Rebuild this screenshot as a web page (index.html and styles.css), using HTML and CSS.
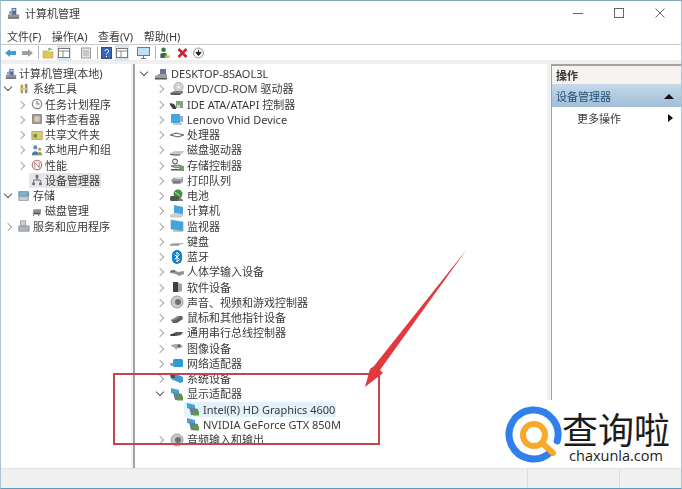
FILE: index.html
```html
<!DOCTYPE html>
<html lang="zh">
<head>
<meta charset="utf-8">
<title>计算机管理</title>
<link rel="stylesheet" href="styles.css">
</head>
<body>
<svg class="defs" width="0" height="0">
<defs>
<symbol id="comp" viewBox="0 0 14 14"><rect x="5" y="1" width="5" height="8" fill="#5a6b8c"/><rect x="6" y="2" width="3" height="2" fill="#cfd8ea"/><rect x="1" y="8" width="12" height="4" fill="#8b93a5"/><path d="M1 12h12" stroke="#444" /><circle cx="4" cy="6" r="2" fill="#7fa8d8"/></symbol>
<symbol id="tools" viewBox="0 0 14 14"><rect x="3" y="2" width="3" height="10" fill="#b79b4c"/><rect x="8" y="1" width="3" height="11" fill="#8a8f96"/><rect x="2" y="6" width="10" height="2" fill="#d9c77f"/></symbol>
<symbol id="clock" viewBox="0 0 14 14"><circle cx="7" cy="7" r="5.5" fill="#f2f2f2" stroke="#8a8a8a" stroke-width="1.4"/><path d="M7 3.5V7h3" stroke="#666" fill="none"/></symbol>
<symbol id="log" viewBox="0 0 14 14"><rect x="2" y="2" width="10" height="10" fill="#a7a39a" stroke="#6e6a62"/><rect x="4" y="4" width="6" height="6" fill="#d8c9b5"/></symbol>
<symbol id="share" viewBox="0 0 14 14"><rect x="1" y="3" width="12" height="9" fill="#e3c66c" stroke="#b59a45"/><rect x="3" y="6" width="4" height="4" fill="#4f9b53"/></symbol>
<symbol id="users" viewBox="0 0 14 14"><circle cx="5" cy="4" r="2.4" fill="#5a8cc4"/><path d="M1 13c0-6 8-6 8 0z" fill="#4a76ad"/><circle cx="10" cy="6" r="2" fill="#d39a63"/><path d="M7 13c0-5 6-5 6 0z" fill="#7aa05b"/></symbol>
<symbol id="perf" viewBox="0 0 14 14"><circle cx="7" cy="7" r="5.5" fill="#fff" stroke="#c6787a" stroke-width="1.5"/><path d="M4.5 10V4l5 6V4" stroke="#777" fill="none"/></symbol>
<symbol id="tree" viewBox="0 0 14 14"><rect x="5.5" y="1" width="3" height="4" fill="#5b6b7d"/><path d="M3 10V7h8v3M7 5v2" stroke="#666" fill="none"/><rect x="1.5" y="10" width="3" height="3" fill="#5b6b7d"/><rect x="9.5" y="10" width="3" height="3" fill="#5b6b7d"/></symbol>
<symbol id="store" viewBox="0 0 14 14"><rect x="1" y="2" width="11" height="5" fill="#7fb2d9" stroke="#5b87aa"/><rect x="1" y="8" width="11" height="4" fill="#cfd5da" stroke="#87919a"/><path d="M10 5l3-2v4z" fill="#5fa35f"/></symbol>
<symbol id="diskm" viewBox="0 0 14 14"><path d="M3 5h9l-1 5H2z" fill="#8a8f95"/><rect x="3" y="9" width="8" height="2" fill="#555"/><path d="M3 11v2M9 11v2" stroke="#555"/></symbol>
<symbol id="svc" viewBox="0 0 14 14"><rect x="3" y="1" width="6" height="6" fill="#c9ced3" stroke="#9aa0a6"/><rect x="1" y="7" width="12" height="6" fill="#aeb4ba" stroke="#8c9298"/></symbol>
<symbol id="pcroot" viewBox="0 0 14 14"><rect x="6" y="2" width="6" height="7" fill="#6c7688"/><path d="M1 9l4-2h8v4H1z" fill="#9aa1ac"/><rect x="1" y="11" width="12" height="1.5" fill="#555"/></symbol>
<symbol id="dvd" viewBox="0 0 14 14"><circle cx="8.5" cy="5" r="4.5" fill="#d2d4d6" stroke="#a9abad"/><circle cx="8.5" cy="5" r="1" fill="#fff"/><path d="M0 11l4-2h9v2l-3 2H1z" fill="#7e8286"/><path d="M1 12h9" stroke="#3a3a3a"/></symbol>
<symbol id="ide" viewBox="0 0 14 14"><path d="M0 6l4 1 2 3v2H3L0 8z" fill="#3e4347"/><rect x="6" y="4" width="7" height="7" fill="#7fa383"/><rect x="7" y="8" width="3" height="3" fill="#cfe0b0"/></symbol>
<symbol id="vhid" viewBox="0 0 14 14"><rect x="1" y="2" width="9" height="9" fill="#43a6dc"/><rect x="10" y="4" width="3" height="6" fill="#8fb2c6"/><path d="M3 12h9" stroke="#889"/></symbol>
<symbol id="cpu" viewBox="0 0 14 14"><path d="M0 7l6-2 8 2-6 2z" fill="#fff" stroke="#5a5f63" stroke-width="1.1"/></symbol>
<symbol id="disk" viewBox="0 0 14 14"><path d="M0 10l5-2h9l-1 2-3 2H2z" fill="#c6c8ca"/><path d="M0 11l3 1h7" stroke="#444" fill="none"/></symbol>
<symbol id="ctrl" viewBox="0 0 14 14"><circle cx="5" cy="3.5" r="2.5" fill="#eee" stroke="#444"/><path d="M1 8l7-1 4 1-6 2z" fill="#bbb" stroke="#444" stroke-width=".7"/><rect x="1" y="11" width="8" height="1.5" fill="#555"/><rect x="9" y="8" width="5" height="5" fill="#6fa36a"/></symbol>
<symbol id="print" viewBox="0 0 14 14"><path d="M1 7l4-3h8v5l-3 2H3z" fill="#9b9d9f"/><path d="M5 4h7v2H5z" fill="#dcdcdc"/><path d="M3 9h7" stroke="#555"/></symbol>
<symbol id="batt" viewBox="0 0 14 14"><circle cx="8" cy="5" r="4.5" fill="#3f8f45"/><rect x="0" y="7" width="9" height="5" rx="1.5" fill="#4c5a4a"/><path d="M5 3l5 4" stroke="#cfe6c8"/><path d="M9 8l4 3v1H8z" fill="#777"/></symbol>
<symbol id="pc" viewBox="0 0 14 14"><path d="M4 1l9 2v7L4 9z" fill="#47a5dd"/><path d="M0 12l3-2h9l1 1-2 2H1z" fill="#d3d6d9" stroke="#9a9a9a" stroke-width=".5"/></symbol>
<symbol id="mon" viewBox="0 0 14 14"><path d="M1 1l12 2v9L1 10z" fill="#43a3dc" stroke="#6fa5c6" stroke-width=".7"/><path d="M3 12h9" stroke="#8a99a5"/></symbol>
<symbol id="kbd" viewBox="0 0 14 14"><path d="M0 10l3-1h11l-1 1-3 1z" fill="#b9bcbf"/><path d="M0 11h9" stroke="#5a5a5a"/></symbol>
<symbol id="bt" viewBox="0 0 14 14"><rect x="2" y="0" width="10" height="14" rx="5" fill="#0f7fcf"/><path d="M4.5 4.5l5 5L7 12V2l2.500 2.500-5 5" stroke="#fff" fill="none"/></symbol>
<symbol id="hid" viewBox="0 0 14 14"><path d="M0 6l4-1 4 2 6-1v3l-5 2-3-2-6-1z" fill="#8f9396"/><path d="M1 6h4" stroke="#444"/></symbol>
<symbol id="soft" viewBox="0 0 14 14"><rect x="3" y="2" width="5" height="10" fill="#3e4144"/><path d="M8 3l4 1v7l-4 1z" fill="#9fa3a6"/></symbol>
<symbol id="snd" viewBox="0 0 14 14"><circle cx="7" cy="7" r="6" fill="#c7c9cb" stroke="#9a9c9e"/><circle cx="8" cy="7" r="3" fill="#6d7073"/></symbol>
<symbol id="mouse" viewBox="0 0 14 14"><path d="M1 9l7-4h4l1 3-6 4H3z" fill="#5d6164"/><path d="M3 9l6-3" stroke="#aaa"/></symbol>
<symbol id="usb" viewBox="0 0 14 14"><path d="M0 9l6-3h7l-2 3-5 1H2z" fill="#54585b"/><path d="M0 9h5" stroke="#222"/></symbol>
<symbol id="cam" viewBox="0 0 14 14"><path d="M1 4l4-1h5l3 2-2 2H8L6 9 4 6H2z" fill="#a8abad"/><circle cx="9" cy="5" r="1.400" fill="#555"/></symbol>
<symbol id="net" viewBox="0 0 14 14"><rect x="3" y="3" width="10" height="8" rx="1.500" fill="#2f9bd4"/><path d="M0 7h4v3H1z" fill="#7f9cae"/></symbol>
<symbol id="sys" viewBox="0 0 14 14"><path d="M1 3l5-1 7 3v5l-3 1-9-4z" fill="#3c9bd5"/><path d="M0 3h5v3H1z" fill="#4a5056"/></symbol>
<symbol id="gpu" viewBox="0 0 14 14"><path d="M1 1l8 2v5L1 6z" fill="#45a4da"/><path d="M3 5l9 2v6H5z" fill="#6c7f8c"/><rect x="7" y="9" width="6" height="4.500" fill="#5a9b49"/></symbol>
</defs>
</svg>

<div class="window">
  <header class="titlebar">
    <svg class="ticon"><use href="#comp"/></svg>
    <span class="ttext">计算机管理</span>
    <div class="winctrls">
      <svg class="wbtn" viewBox="0 0 11 11"><path d="M0 5.500h10" stroke="#666"/></svg>
      <svg class="wbtn" viewBox="0 0 11 11"><rect x=".5" y=".5" width="9" height="9" fill="none" stroke="#666"/></svg>
      <svg class="wbtn" viewBox="0 0 11 11"><path d="M.5.5l9 9M9.500.5l-9 9" stroke="#666"/></svg>
    </div>
  </header>
  <nav class="menubar"><span>文件(F)</span><span>操作(A)</span><span>查看(V)</span><span>帮助(H)</span></nav>
  <div class="toolbar">
    <svg class="tb w12" viewBox="0 0 12 12"><path d="M0 6l5-4v2h6v4H5v2z" fill="#3f9fd8"/></svg>
    <svg class="tb w12" viewBox="0 0 12 12"><path d="M12 6L7 2v2H1v4h6v2z" fill="#9a9fa3"/></svg>
    <i class="sep"></i>
    <svg class="tb w12" viewBox="0 0 12 12"><path d="M1 4h4l1 1h5v6H1z" fill="#e6c558" stroke="#b89a3c" stroke-width=".6"/><path d="M7 4V1l3 2" stroke="#4f9b53" fill="none"/></svg>
    <span class="on"><svg class="tb w12" viewBox="0 0 12 12"><rect x=".5" y="1.500" width="11" height="9" fill="#fff" stroke="#777"/><path d="M.5 4h11M5 4v6" stroke="#888"/></svg></span>
    <svg class="tb w12 m" viewBox="0 0 12 12"><rect x="1.500" y="1" width="9" height="10" fill="#e2e4e6" stroke="#9a9c9e"/><path d="M3 4h6M3 6h6M3 8h6" stroke="#aaa"/></svg>
    <i class="sep"></i>
    <svg class="tb w11" viewBox="0 0 11 12"><rect x=".5" y=".5" width="10" height="11" fill="#3a67b5" stroke="#2a4c88"/><path d="M4 4c0-2 3.500-2 3.500 0S5.500 6 5.500 7.500M5.500 9v1" stroke="#fff" fill="none"/></svg>
    <span class="on n2"><svg class="tb w12" viewBox="0 0 12 12"><rect x=".5" y="1.500" width="11" height="9" fill="#fff" stroke="#777"/><path d="M.5 4h11M5 4v6" stroke="#888"/></svg></span>
    <svg class="tb w13 m2" viewBox="0 0 13 12"><rect x=".5" y=".5" width="12" height="8" fill="#bfe0f5" stroke="#3f86c0"/><path d="M6.500 9v2M4 11.500h5" stroke="#777"/></svg>
    <i class="sep"></i>
    <svg class="tb w11" viewBox="0 0 11 13"><circle cx="4.500" cy="3" r="2.500" fill="#2f7d3a"/><path d="M1 12V8c0-2 7-2 7 0v4z" fill="#3b6b43"/><rect x="6" y="9" width="5" height="3" fill="#c9c24d"/></svg>
    <svg class="tb w11 m3" viewBox="0 0 11 11"><path d="M1.500 1.500l8 8M9.500 1.500l-8 8" stroke="#d3202a" stroke-width="2.600"/></svg>
    <svg class="tb w11 m4" viewBox="0 0 11 11"><circle cx="5.500" cy="5.500" r="5" fill="#f3f3f3" stroke="#999"/><path d="M5.500 2.500v3M3 5l2.500 3L8 5z" fill="#222" stroke="#222"/></svg>
  </div>

  <main class="panes">
    <section class="pane left">
      <div class="row l0"><span class="cell"><svg class="ic"><use href="#comp"/></svg><span>计算机管理(本地)</span></span></div>
      <div class="row l1"><i class="chev open"></i><span class="cell"><svg class="ic"><use href="#tools"/></svg><span>系统工具</span></span></div>
      <div class="row l2"><i class="chev"></i><span class="cell"><svg class="ic"><use href="#clock"/></svg><span>任务计划程序</span></span></div>
      <div class="row l2"><i class="chev"></i><span class="cell"><svg class="ic"><use href="#log"/></svg><span>事件查看器</span></span></div>
      <div class="row l2"><i class="chev"></i><span class="cell"><svg class="ic"><use href="#share"/></svg><span>共享文件夹</span></span></div>
      <div class="row l2"><i class="chev"></i><span class="cell"><svg class="ic"><use href="#users"/></svg><span>本地用户和组</span></span></div>
      <div class="row l2"><i class="chev"></i><span class="cell"><svg class="ic"><use href="#perf"/></svg><span>性能</span></span></div>
      <div class="row l2"><i class="nochev"></i><span class="cell picked"><svg class="ic"><use href="#tree"/></svg><span>设备管理器</span></span></div>
      <div class="row l1"><i class="chev open"></i><span class="cell"><svg class="ic"><use href="#store"/></svg><span>存储</span></span></div>
      <div class="row l2"><i class="nochev"></i><span class="cell"><svg class="ic"><use href="#diskm"/></svg><span>磁盘管理</span></span></div>
      <div class="row l1"><i class="chev"></i><span class="cell"><svg class="ic"><use href="#svc"/></svg><span>服务和应用程序</span></span></div>
    </section>

    <section class="pane center">
      <div class="row l0"><i class="chev open"></i><span class="cell"><svg class="ic"><use href="#pcroot"/></svg><span>DESKTOP-8SAOL3L</span></span></div>
      <div class="row l1"><i class="chev"></i><span class="cell"><svg class="ic"><use href="#dvd"/></svg><span>DVD/CD-ROM 驱动器</span></span></div>
      <div class="row l1"><i class="chev"></i><span class="cell"><svg class="ic"><use href="#ide"/></svg><span>IDE ATA/ATAPI 控制器</span></span></div>
      <div class="row l1"><i class="chev"></i><span class="cell"><svg class="ic"><use href="#vhid"/></svg><span>Lenovo Vhid Device</span></span></div>
      <div class="row l1"><i class="chev"></i><span class="cell"><svg class="ic"><use href="#cpu"/></svg><span>处理器</span></span></div>
      <div class="row l1"><i class="chev"></i><span class="cell"><svg class="ic"><use href="#disk"/></svg><span>磁盘驱动器</span></span></div>
      <div class="row l1"><i class="chev"></i><span class="cell"><svg class="ic"><use href="#ctrl"/></svg><span>存储控制器</span></span></div>
      <div class="row l1"><i class="chev"></i><span class="cell"><svg class="ic"><use href="#print"/></svg><span>打印队列</span></span></div>
      <div class="row l1"><i class="chev"></i><span class="cell"><svg class="ic"><use href="#batt"/></svg><span>电池</span></span></div>
      <div class="row l1"><i class="chev"></i><span class="cell"><svg class="ic"><use href="#pc"/></svg><span>计算机</span></span></div>
      <div class="row l1"><i class="chev"></i><span class="cell"><svg class="ic"><use href="#mon"/></svg><span>监视器</span></span></div>
      <div class="row l1"><i class="chev"></i><span class="cell"><svg class="ic"><use href="#kbd"/></svg><span>键盘</span></span></div>
      <div class="row l1"><i class="chev"></i><span class="cell"><svg class="ic"><use href="#bt"/></svg><span>蓝牙</span></span></div>
      <div class="row l1"><i class="chev"></i><span class="cell"><svg class="ic"><use href="#hid"/></svg><span>人体学输入设备</span></span></div>
      <div class="row l1"><i class="chev"></i><span class="cell"><svg class="ic"><use href="#soft"/></svg><span>软件设备</span></span></div>
      <div class="row l1"><i class="chev"></i><span class="cell"><svg class="ic"><use href="#snd"/></svg><span>声音、视频和游戏控制器</span></span></div>
      <div class="row l1"><i class="chev"></i><span class="cell"><svg class="ic"><use href="#mouse"/></svg><span>鼠标和其他指针设备</span></span></div>
      <div class="row l1"><i class="chev"></i><span class="cell"><svg class="ic"><use href="#usb"/></svg><span>通用串行总线控制器</span></span></div>
      <div class="row l1"><i class="chev"></i><span class="cell"><svg class="ic"><use href="#cam"/></svg><span>图像设备</span></span></div>
      <div class="row l1"><i class="chev"></i><span class="cell"><svg class="ic"><use href="#net"/></svg><span>网络适配器</span></span></div>
      <div class="row l1"><i class="chev"></i><span class="cell"><svg class="ic"><use href="#sys"/></svg><span>系统设备</span></span></div>
      <div class="row l1"><i class="chev open"></i><span class="cell"><svg class="ic"><use href="#gpu"/></svg><span>显示适配器</span></span></div>
      <div class="row l2"><i class="nochev"></i><span class="cell picked blue"><svg class="ic"><use href="#gpu"/></svg><span>Intel(R) HD Graphics 4600</span></span></div>
      <div class="row l2"><i class="nochev"></i><span class="cell"><svg class="ic"><use href="#gpu"/></svg><span>NVIDIA GeForce GTX 850M</span></span></div>
      <div class="row l1"><i class="chev"></i><span class="cell"><svg class="ic"><use href="#snd"/></svg><span>音频输入和输出</span></span></div>
    </section>

    <aside class="pane actions">
      <div class="ahead">操作</div>
      <div class="asub"><span>设备管理器</span><i class="tri-up"></i></div>
      <div class="aitem"><span>更多操作</span><i class="tri-right"></i></div>
    </aside>
  </main>

  <footer class="status"><span class="s1"></span><span class="s2"></span><span class="s3"></span></footer>
</div>

<div class="redbox"></div>
<svg class="arrow" viewBox="0 0 120 150"><polygon points="109,1 22,122 25,125 7,139 12,121 16,118" fill="#e2393f"/></svg>

<div class="logo">
  <svg class="mark" viewBox="0 0 60 60">
    <path d="M51 40A24.500 24.500 0 1 0 43 50" fill="none" stroke="#2f80ed" stroke-width="7" stroke-linecap="round" transform="rotate(-8 30 30)"/>
    <circle cx="29" cy="31" r="11" fill="none" stroke="#f7a92b" stroke-width="6"/>
    <path d="M37 39l11 10" stroke="#f7a92b" stroke-width="6" stroke-linecap="round"/>
  </svg>
  <div class="brand"><span class="bname">查询啦</span><span class="burl">chaxunla.com</span></div>
</div>
</body>
</html>
```
FILE: styles.css
```css
* { box-sizing: border-box; }
html, body { margin: 0; padding: 0; }
body {
  width: 682px; height: 489px; overflow: hidden; position: relative;
  background: #fff; color: #3a3a3a;
  font: 11px/1 "Noto Sans", "Noto Sans CJK SC", sans-serif;
}
.defs { position: absolute; }
.window {
  width: 682px; height: 489px; display: flex; flex-direction: column;
  border-top: 1px solid #7fa9bb; border-bottom: 1px solid #5b9cc4;
  border-left: 1px solid #a9c4d2; border-right: 1px solid #a9c4d2;
  filter: blur(.4px);
}
.titlebar { height: 25px; display: flex; align-items: center; padding-left: 6px; flex: none; }
.ticon { width: 13px; height: 13px; }
.ttext { margin-left: 5px; }
.winctrls { margin-left: auto; display: flex; gap: 30px; padding-right: 15px; }
.wbtn { width: 11px; height: 11px; }
.menubar {
  height: 19px; flex: none; display: flex; gap: 10.500px; align-items: center;
  padding: 2px 0 0 6px; border-bottom: 1px solid #c9c9c9;
}
.toolbar {
  height: 16px; flex: none; display: flex; align-items: center; padding-left: 4px;
  border-bottom: 1px solid #ececec;
}
.tb { display: block; flex: none; height: 12px; }
.tb + .tb { margin-left: 4px; }
.w11 { width: 11px; }
.w12 { width: 12px; }
.w13 { width: 13px; }
.sep { width: 1px; height: 13px; background: #b5b5b5; margin: 0 3px 0 5px; flex: none; }
.on { background: #d6e6f2; padding: 2px 1px; margin-left: 3px; flex: none; }
.on.n2 { margin-left: 3px; }
.tb.m { margin-left: 9px; }
.tb.m2 { margin-left: 8px; }
.tb.m3 { margin-left: 7px; }
.tb.m4 { margin-left: 5px; }
.panes {
  flex: 1; min-height: 0; display: flex; background: #f0f0f0; padding-top: 3px;
}
.pane { background: #fff; height: 100%; }
.left { width: 130px; padding-top: 2px; margin-right: 2px; }
.center {
  width: 414px; padding-top: 2px; margin-right: 4px;
  border-left: 2px solid #a3a3a3;
}
.actions { flex: 1; border-left: 1px solid #a3a3a3; border-top: 2px solid #a3a3a3; }
.row { height: 15.25px; display: flex; align-items: center; white-space: nowrap; }
.chev, .nochev { width: 14px; height: 100%; flex: none; position: relative; display: block; }
.chev::after {
  content: ""; position: absolute; left: 1px; top: 5px; width: 5px; height: 5px;
  border-right: 1px solid #a6a6a6; border-top: 1px solid #a6a6a6; transform: rotate(45deg);
}
.chev.open::after {
  left: 1px; top: 3px; border-color: #555; transform: rotate(135deg);
}
.cell { display: flex; align-items: center; gap: 2px; height: 15px; }
.picked { background: #e6e6e6; margin-left: -2px; padding: 0 1px 0 2px; }
.picked.blue { background: #e3f1fb; padding-right: 1px; }
.ic { width: 13px; height: 13px; flex: none; }
.left .l0 { padding-left: 4px; }
.left .l1 { padding-left: 3px; }
.left .l1 .cell { gap: 3px; }
.left .l2 { padding-left: 16px; }
.left .ic { width: 12px; height: 12px; }
.center .l0 { padding-left: 5px; }
.center .l1 { padding-left: 21px; }
.center .l2 { padding-left: 37px; }
.center .cell { gap: 3px; }
.center .row .ic { width: 14px; height: 14px; }
.ahead {
  height: 18px; display: flex; align-items: center; padding-left: 4px;
  font-weight: 700; background: #f6f3ee;
}
.asub {
  height: 23px; display: flex; align-items: center; justify-content: space-between;
  padding: 1px 7px 0 4px; color: #24527a;
  background: linear-gradient(#c6d9e9, #9fbdd6);
}
.aitem {
  height: 22px; display: flex; align-items: center; justify-content: space-between;
  padding: 0 8px 0 25px;
}
.tri-up { width: 0; height: 0; border: 5px solid transparent; border-top: 0; border-bottom-color: #111; }
.tri-right { width: 0; height: 0; border: 4px solid transparent; border-right: 0; border-left: 5px solid #111; }
.status { height: 20px; flex: none; display: flex; background: #f0f0f0; border-top: 1px solid #e2e2e2; }
.s1 { width: 527px; border-right: 1px solid #dcdcdc; }
.s2 { width: 92px; border-right: 1px solid #dcdcdc; }
.s3 { flex: 1; }
.redbox {
  position: absolute; left: 113px; top: 373px; width: 267px; height: 72px;
  border: 2px solid #c4454c;
}
.arrow { position: absolute; left: 358px; top: 248px; width: 120px; height: 150px; }
.logo {
  position: absolute; left: 503px; top: 400px; width: 176px; height: 68px;
  background: #fff; display: flex; align-items: center;
}
.mark { width: 60px; height: 60px; flex: none; margin-left: 2px; }
.brand { display: flex; flex-direction: column; align-items: center; margin-left: -3px; }
.bname { font: 36px/38px "Noto Sans CJK SC", sans-serif; color: #1c1c1c; margin-top: 4px; }
.burl { font: 14.500px/17px "Open Sans", "Liberation Sans", sans-serif; color: #222; }
```
